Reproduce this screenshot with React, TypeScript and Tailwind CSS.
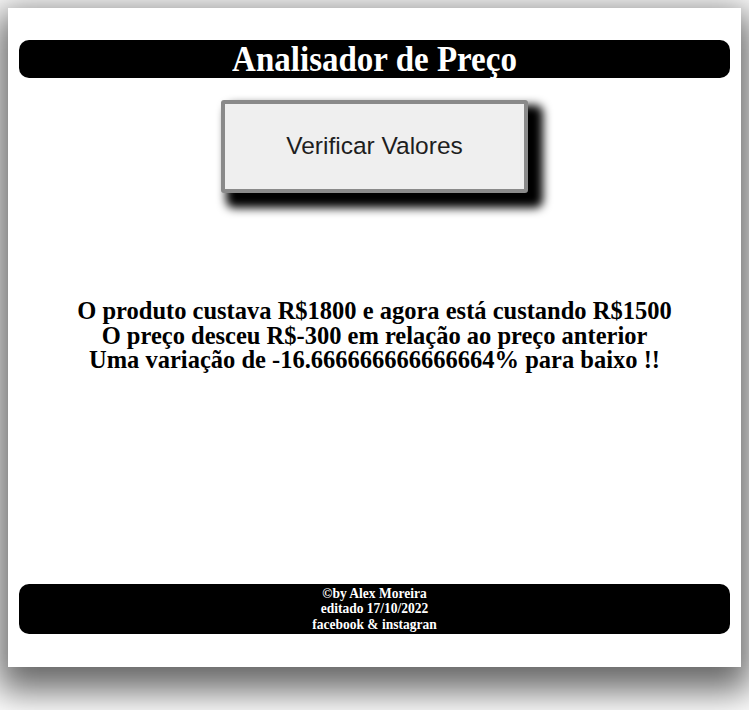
export default function App() {
  return (
    <div className="min-h-[710px] w-full bg-white p-2">
      <div className="flex h-[659px] flex-col bg-white px-[11px] pt-[32px] shadow-[0_14px_34px_10px_rgba(0,0,0,0.6)]">
        <header className="flex h-[38px] items-center justify-center rounded-[10px] bg-black">
          <h1 className="origin-center scale-y-[1.08] text-[33px] font-bold leading-none text-white" style={{ fontFamily: '"Liberation Serif", serif' }}>
            Analisador de Preço
          </h1>
        </header>
        <div className="mt-[22px] flex justify-center">
          <button className="h-[93px] w-[307px] rounded-[3px] border-4 border-[#8a8a8a] bg-[#efefef] text-[24.5px] text-[#1e1e1e] shadow-[10px_10px_10px_5px_rgba(0,0,0,1)]" style={{ fontFamily: '"Liberation Sans", Arial, sans-serif' }}>
            Verificar Valores
          </button>
        </div>
        <div className="mt-[106px] text-center text-[24.5px] font-bold leading-[24.5px] text-black" style={{ fontFamily: '"Liberation Serif", serif' }}>
          <p>O produto custava R$1800 e agora está custando R$1500</p>
          <p>O preço desceu R$-300 em relação ao preço anterior</p>
          <p>Uma variação de -16.666666666666664% para baixo !!</p>
        </div>
        <footer className="mt-auto mb-[33px] flex h-[50px] flex-col items-center justify-center rounded-[10px] bg-black text-[13.5px] font-bold leading-[15.5px] text-white" style={{ fontFamily: '"Liberation Serif", serif' }}>
          <p className="scale-y-[1.1]">©by Alex Moreira</p>
          <p className="scale-y-[1.1]">editado 17/10/2022</p>
          <p className="scale-y-[1.1]">facebook &amp; instagran</p>
        </footer>
      </div>
    </div>
  );
}
